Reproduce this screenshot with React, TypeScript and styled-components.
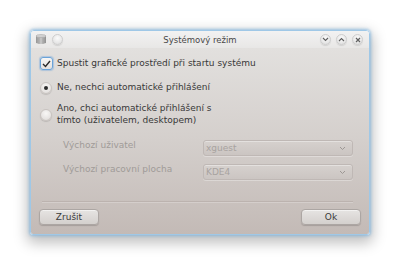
import React from "react";
import styled, { createGlobalStyle } from "styled-components";

const Global = createGlobalStyle`
  html, body { margin: 0; padding: 0; background: #ffffff; }
  body { width: 400px; height: 265px; overflow: hidden; font-family: "DejaVu Sans", "Liberation Sans", sans-serif; }
`;

const Page = styled.div`
  width: 400px;
  height: 265px;
  padding: 30px 30px 0 30px;
  box-sizing: border-box;
`;

const Window = styled.div`
  width: 340px;
  height: 205px;
  box-sizing: border-box;
  border: 1px solid #9fc8e7;
  border-radius: 4px 4px 3px 3px;
  box-shadow: 0 0 3px 1px rgba(120, 176, 222, 0.7), 0 5px 14px 3px rgba(0, 0, 0, 0.25);
  display: flex;
  flex-direction: column;
  overflow: hidden;
  position: relative;
`;

const TitleBar = styled.div`
  height: 17px;
  flex: none;
  display: flex;
  align-items: center;
  padding: 0 6px 0 4px;
  background: linear-gradient(#f2f2f2, #e8e7e6);
  position: relative;
`;

const TitleText = styled.div`
  position: absolute;
  left: 0;
  right: 0;
  top: 0;
  line-height: 18px;
  text-align: center;
  font-size: 8.5px;
  color: #474747;
  pointer-events: none;
`;

const TitleGroup = styled.div`
  display: flex;
  align-items: center;
  gap: ${(p: { $gap: number }) => p.$gap}px;
  position: relative;
`;

const Spacer = styled.div`
  flex: 1;
`;

const CircleBtn = styled.div`
  width: 11px;
  height: 11px;
  border-radius: 50%;
  box-sizing: border-box;
  border: 1px solid #cdcdcd;
  background: radial-gradient(circle at 50% 35%, #fbfbfb 0%, #e8e8e8 60%, #d9d9d9 100%);
  box-shadow: 0 1px 1px rgba(0, 0, 0, 0.1);
  display: flex;
  align-items: center;
  justify-content: center;
`;

const Body = styled.div`
  flex: 1;
  display: flex;
  flex-direction: column;
  padding: 9px 8px 9px 8px;
  background: linear-gradient(#e2e0de, #d4cfcc 50%, #c3bab6);
  color: #383838;
  font-size: 9px;
`;

const Choices = styled.div`
  display: flex;
  flex-direction: column;
  padding-left: 1px;
`;

const ChoiceRow = styled.label`
  display: flex;
  align-items: center;
  gap: 4px;
  margin-top: ${(p: { $mt: number }) => p.$mt}px;
  line-height: 11.5px;
`;

const CheckBox = styled.div`
  width: 13px;
  height: 13px;
  flex: none;
  box-sizing: border-box;
  border-radius: 3px;
  border: 1px solid #6aa3d9;
  background: linear-gradient(#f7f6f5, #e4e1df);
  box-shadow: 0 0 1px 1px rgba(110, 165, 220, 0.45);
  display: flex;
  align-items: center;
  justify-content: center;
`;

const Radio = styled.div`
  width: 12px;
  height: 12px;
  flex: none;
  box-sizing: border-box;
  border-radius: 50%;
  border: 1px solid #c8c3c0;
  background: radial-gradient(circle at 50% 35%, #f8f7f6, #e5e2e0 70%, #dad6d3);
  box-shadow: 0 1px 1px rgba(0, 0, 0, 0.13);
  display: flex;
  align-items: center;
  justify-content: center;
  margin-right: 1px;
`;

const Dot = styled.div`
  width: 4px;
  height: 4px;
  border-radius: 50%;
  background: #2c2c2c;
`;

const ChoiceText = styled.span`
  display: block;
`;

const Form = styled.div`
  display: grid;
  grid-template-columns: 140px 150px;
  row-gap: 8px;
  padding-left: 24px;
  margin-top: 14px;
  color: #a09b98;
`;

const FieldLabel = styled.div`
  line-height: 11px;
`;

const Combo = styled.div`
  height: 16px;
  box-sizing: border-box;
  border-radius: 3px;
  border: 1px solid #bfb8b5;
  background: linear-gradient(#d6d1ce, #cbc5c2);
  box-shadow: inset 0 1px 0 rgba(255, 255, 255, 0.35), 0 1px 0 rgba(255, 255, 255, 0.3);
  display: flex;
  align-items: center;
  justify-content: space-between;
  padding: 0 6px 0 2px;
  color: #a8a3a0;
`;

const Separator = styled.div`
  height: 1px;
  margin: auto 8px 7px 3px;
  background: #bcb3af;
  box-shadow: 0 1px 0 rgba(255, 255, 255, 0.22);
`;

const Footer = styled.div`
  display: flex;
  justify-content: space-between;
`;

const Button = styled.button`
  width: 60px;
  height: 16px;
  box-sizing: border-box;
  border-radius: 4px;
  border: 1px solid #aca6a3;
  background: linear-gradient(#e6e4e2, #d4d0cd);
  box-shadow: 0 1px 1px rgba(0, 0, 0, 0.16), inset 0 1px 0 rgba(255, 255, 255, 0.5);
  font-family: "DejaVu Sans", "Liberation Sans", sans-serif;
  font-size: 9px;
  color: #3a3a3a;
  padding: 0;
  line-height: 14px;
`;

const Chevron = ({ up }: { up?: boolean }) => (
  <svg width="7" height="5" viewBox="0 0 7 5">
    <path
      d={up ? "M1 4 L3.5 1.5 L6 4" : "M1 1 L3.5 3.5 L6 1"}
      fill="none"
      stroke="#606060"
      strokeWidth="1.1"
    />
  </svg>
);

const Cross = () => (
  <svg width="6" height="6" viewBox="0 0 6 6">
    <path d="M1 1 L5 5 M5 1 L1 5" stroke="#606060" strokeWidth="1.2" />
  </svg>
);

const AppIcon = () => (
  <svg width="12" height="11" viewBox="0 0 12 11">
    <defs>
      <linearGradient id="cyl" x1="0" x2="1" y1="0" y2="0">
        <stop offset="0" stopColor="#959595" />
        <stop offset="0.5" stopColor="#c8c8c8" />
        <stop offset="1" stopColor="#8f8f8f" />
      </linearGradient>
    </defs>
    <path d="M1 2 L1 9 Q6 11 11 9 L11 2 Z" fill="url(#cyl)" />
    <ellipse cx="6" cy="2" rx="5" ry="1.5" fill="#d2d2d2" stroke="#a0a0a0" strokeWidth="0.5" />
    <path d="M4 3.5 L4 10 M8 3.5 L8 10" stroke="#a2a2a2" strokeWidth="0.6" />
  </svg>
);

const ComboArrow = () => (
  <svg width="7" height="5" viewBox="0 0 7 5">
    <path d="M1 1 L3.5 3.5 L6 1" fill="none" stroke="#9d9895" strokeWidth="1" />
  </svg>
);

export default function App() {
  return (
    <Page>
      <Global />
      <Window>
        <TitleBar>
          <TitleText>Systémový režim</TitleText>
          <TitleGroup $gap={5}>
            <AppIcon />
            <CircleBtn />
          </TitleGroup>
          <Spacer />
          <TitleGroup $gap={5}>
            <CircleBtn>
              <Chevron />
            </CircleBtn>
            <CircleBtn>
              <Chevron up />
            </CircleBtn>
            <CircleBtn>
              <Cross />
            </CircleBtn>
          </TitleGroup>
        </TitleBar>
        <Body>
          <Choices>
            <ChoiceRow $mt={0}>
              <CheckBox>
                <svg width="9" height="8" viewBox="0 0 9 8">
                  <path d="M1 4 L3.5 6.5 L8 1" fill="none" stroke="#2a2a2a" strokeWidth="1.4" />
                </svg>
              </CheckBox>
              <ChoiceText>Spustit grafické prostředí při startu systému</ChoiceText>
            </ChoiceRow>
            <ChoiceRow $mt={12}>
              <Radio>
                <Dot />
              </Radio>
              <ChoiceText>Ne, nechci automatické přihlášení</ChoiceText>
            </ChoiceRow>
            <ChoiceRow $mt={9}>
              <Radio />
              <ChoiceText>
                Ano, chci automatické přihlášení s
                <br />
                tímto (uživatelem, desktopem)
              </ChoiceText>
            </ChoiceRow>
          </Choices>
          <Form>
            <FieldLabel>Výchozí uživatel</FieldLabel>
            <Combo>
              <span>xguest</span>
              <ComboArrow />
            </Combo>
            <FieldLabel>Výchozí pracovní plocha</FieldLabel>
            <Combo>
              <span>KDE4</span>
              <ComboArrow />
            </Combo>
          </Form>
          <Separator />
          <Footer>
            <Button>Zrušit</Button>
            <Button>Ok</Button>
          </Footer>
        </Body>
      </Window>
    </Page>
  );
}
